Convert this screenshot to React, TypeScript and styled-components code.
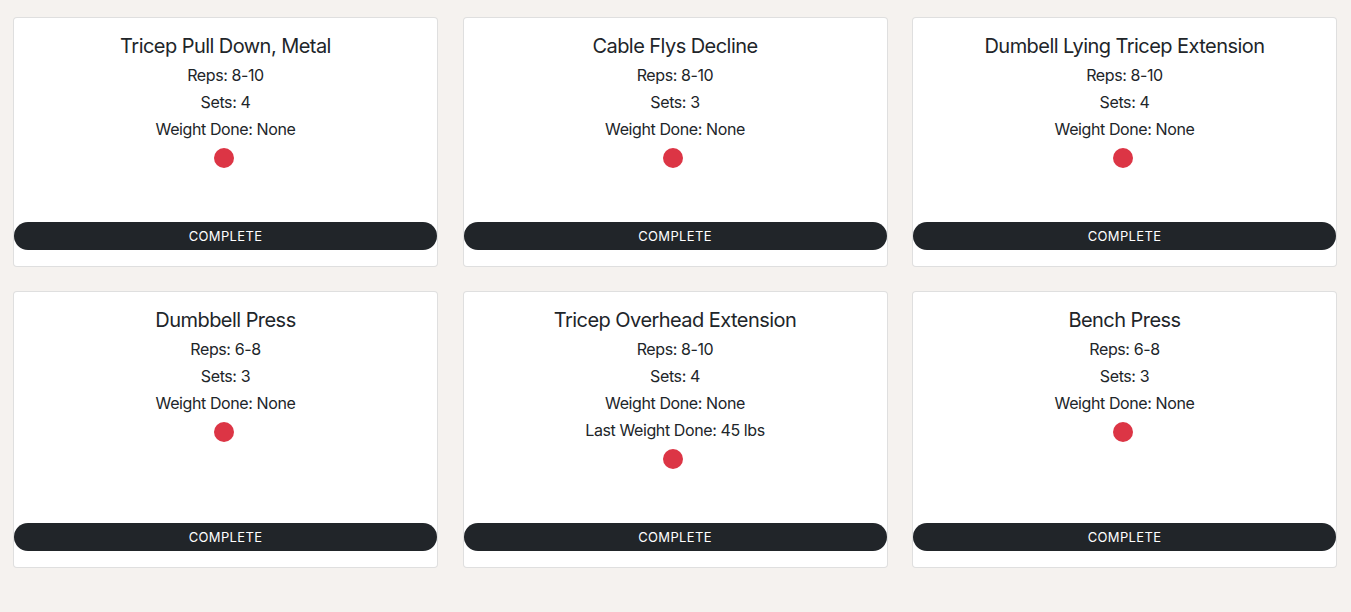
import React from 'react'
import styled, { createGlobalStyle } from 'styled-components'

const GlobalStyle = createGlobalStyle`
  html, body {
    margin: 0;
    padding: 0;
    background: #f5f2ef;
    font-family: Inter, "Noto Sans", "Liberation Sans", sans-serif;
    color: #212529;
  }
  * { box-sizing: border-box; }
`

const Grid = styled.div`
  display: grid;
  grid-template-columns: repeat(3, 1fr);
  column-gap: 24.5px;
  row-gap: 24px;
  padding: 17px 14px 20px 13px;
`

const Card = styled.div`
  display: flex;
  flex-direction: column;
  background: #fff;
  border: 1px solid rgba(0, 0, 0, 0.125);
  border-radius: 4px;
  padding-bottom: 16px;
`

const Body = styled.div`
  display: flex;
  flex-direction: column;
  align-items: center;
  padding: 16px 16px 54px;
  text-align: center;
`

const Title = styled.h5`
  margin: 0 0 5px;
  font-size: 20px;
  font-weight: 400;
  line-height: 24px;
  letter-spacing: -0.55px;
`

const Line = styled.p`
  margin: 0 0 3px;
  font-size: 16px;
  line-height: 24px;
  letter-spacing: -0.4px;
`

const Dot = styled.span<{ done: boolean }>`
  display: block;
  width: 20px;
  height: 20px;
  margin: 4px 4px 0 0;
  border-radius: 50%;
  background: ${p => (p.done ? '#198754' : '#dc3545')};
`

const Button = styled.button`
  margin-top: auto;
  width: 100%;
  height: 28px;
  border: none;
  border-radius: 14px;
  background: #212529;
  color: #fff;
  font-family: inherit;
  font-size: 13px;
  letter-spacing: 0.35px;
  text-transform: uppercase;
  cursor: pointer;
`

type Exercise = {
  name: string
  reps: string
  sets: number
  last?: string
}

const exercises: Exercise[] = [
  { name: 'Tricep Pull Down, Metal', reps: '8-10', sets: 4 },
  { name: 'Cable Flys Decline', reps: '8-10', sets: 3 },
  { name: 'Dumbell Lying Tricep Extension', reps: '8-10', sets: 4 },
  { name: 'Dumbbell Press', reps: '6-8', sets: 3 },
  { name: 'Tricep Overhead Extension', reps: '8-10', sets: 4, last: '45 lbs' },
  { name: 'Bench Press', reps: '6-8', sets: 3 },
]

function ExerciseCard({ ex }: { ex: Exercise }) {
  return (
    <Card>
      <Body>
        <Title>{ex.name}</Title>
        <Line>Reps: {ex.reps}</Line>
        <Line>Sets: {ex.sets}</Line>
        <Line>Weight Done: None</Line>
        {ex.last && <Line>Last Weight Done: {ex.last}</Line>}
        <Dot done={false} />
      </Body>
      <Button>Complete</Button>
    </Card>
  )
}

export default function App() {
  return (
    <>
      <GlobalStyle />
      <Grid>
        {exercises.map(ex => (
          <ExerciseCard key={ex.name} ex={ex} />
        ))}
      </Grid>
    </>
  )
}
